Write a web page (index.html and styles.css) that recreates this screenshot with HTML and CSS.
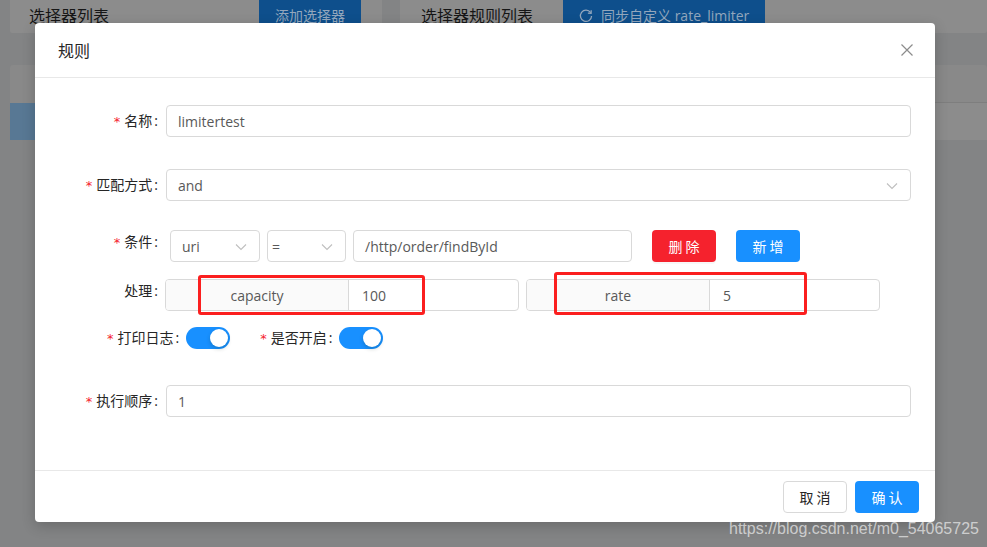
FILE: index.html
```html
<!DOCTYPE html>
<html lang="zh">
<head>
<meta charset="utf-8">
<title>规则</title>
<link rel="stylesheet" href="styles.css">
</head>
<body>
<div class="page">
  <div class="col col-left">
    <div class="topbar">
      <span class="top-title">选择器列表</span>
      <span class="top-btn btn-left">添加选择器</span>
    </div>
    <div class="table">
      <div class="thead"></div>
      <div class="trow selected"></div>
    </div>
  </div>
  <div class="col col-right">
    <div class="topbar topbar-right">
      <span class="top-title">选择器规则列表</span>
      <span class="top-btn btn-right">
        <svg class="sync" width="14" height="14" viewBox="0 0 14 14"><path d="M11.6 3.6 A5.6 5.6 0 1 0 12.6 7" fill="none" stroke="currentColor" stroke-width="1.3"/><path d="M12.2 1.2 L12.1 4.4 L8.9 4.2" fill="none" stroke="currentColor" stroke-width="1.3"/></svg>
        同步自定义 rate_limiter
      </span>
    </div>
    <div class="table">
      <div class="thead"></div>
      <div class="trow"></div>
    </div>
  </div>
</div>

<div class="modal">
  <div class="modal-header">
    <span class="modal-title">规则</span>
    <svg class="close" width="12" height="12" viewBox="0 0 12 12"><path d="M0.5 0.5 L11.5 11.5 M11.5 0.5 L0.5 11.5" stroke="currentColor" stroke-width="1.2"/></svg>
  </div>
  <div class="modal-body">
    <div class="item item-name">
      <div class="label"><span class="req">*</span>名称<span class="colon">:</span></div>
      <div class="control"><div class="input">limitertest</div></div>
    </div>
    <div class="item item-match">
      <div class="label"><span class="req">*</span>匹配方式<span class="colon">:</span></div>
      <div class="control"><div class="input select">and<svg class="arrow" width="12" height="8" viewBox="0 0 12 8"><path d="M1 1.5 L6 6.5 L11 1.5" fill="none" stroke="currentColor" stroke-width="1.1"/></svg></div></div>
    </div>
    <div class="item item-cond">
      <div class="label"><span class="req">*</span>条件<span class="colon">:</span></div>
      <div class="control cond-controls">
        <div class="input select sel-uri">uri<svg class="arrow" width="12" height="8" viewBox="0 0 12 8"><path d="M1 1.5 L6 6.5 L11 1.5" fill="none" stroke="currentColor" stroke-width="1.1"/></svg></div>
        <div class="input select sel-op">=<svg class="arrow" width="12" height="8" viewBox="0 0 12 8"><path d="M1 1.5 L6 6.5 L11 1.5" fill="none" stroke="currentColor" stroke-width="1.1"/></svg></div>
        <div class="input cond-value">/http/order/findById</div>
        <span class="btn btn-danger">删 除</span>
        <span class="btn btn-primary btn-add">新 增</span>
      </div>
    </div>
    <div class="item item-handle">
      <div class="label">处理<span class="colon">:</span></div>
      <div class="control handle-controls">
        <div class="group">
          <div class="addon">capacity</div>
          <div class="group-input">100</div>
        </div>
        <div class="group">
          <div class="addon">rate</div>
          <div class="group-input">5</div>
        </div>
      </div>
    </div>
    <div class="item item-switch">
      <div class="inline">
        <span class="inline-label"><span class="req">*</span>打印日志<span class="colon">:</span></span>
        <span class="switch"><span class="knob"></span></span>
      </div>
      <div class="inline">
        <span class="inline-label"><span class="req">*</span>是否开启<span class="colon">:</span></span>
        <span class="switch"><span class="knob"></span></span>
      </div>
    </div>
    <div class="item item-order">
      <div class="label"><span class="req">*</span>执行顺序<span class="colon">:</span></div>
      <div class="control"><div class="input">1</div></div>
    </div>
  </div>
  <div class="modal-footer">
    <span class="btn btn-default">取 消</span>
    <span class="btn btn-primary">确 认</span>
  </div>
  <div class="mark mark-1"></div>
  <div class="mark mark-2"></div>
</div>

<div class="watermark">https://blog.csdn.net/m0_54065725</div>
</body>
</html>
```

FILE: styles.css
```css
html, body {
  margin: 0;
  padding: 0;
}
body {
  width: 987px;
  height: 547px;
  overflow: hidden;
  position: relative;
  background: #838485;
  font-family: "Open Sans", "Noto Sans CJK SC", sans-serif;
  font-size: 14px;
  color: #262626;
}

/* background page (already dimmed by mask) */
.page {
  display: flex;
  gap: 18px;
  padding-left: 10px;
}
.col-left { width: 372px; flex: none; }
.col-right { flex: 1; }
.topbar {
  height: 33px;
  background: #8c8c8c;
  display: flex;
  align-items: flex-start;
  padding-left: 19px;
  border-radius: 0 0 2px 2px;
}
.topbar-right { padding-left: 21px; }
.top-title {
  font-size: 16px;
  line-height: 31px;
  color: #161616;
  font-family: "Noto Sans CJK SC", sans-serif;
}
.top-btn {
  display: flex;
  align-items: center;
  height: 31px;
  padding: 0 16px;
  background: #0e4f8c;
  color: #93a7bd;
  font-size: 14px;
  line-height: 31px;
}
.btn-left { margin-left: 150px; }
.btn-right { margin-left: 30px; }
.sync { margin-right: 8px; margin-top: 1px; }

.table {
  margin-top: 32px;
  border-radius: 3px 3px 0 0;
  overflow: hidden;
}
.thead { height: 38px; background: #898989; }
.col-right .thead { height: 37px; border-bottom: 1px solid #7e7e7e; }
.trow { height: 37px; background: #8c8c8c; }
.trow.selected { background: #587894; }

/* modal */
.modal {
  position: absolute;
  left: 35px;
  top: 23px;
  width: 900px;
  background: #fff;
  border-radius: 4px;
  box-shadow: 0 4px 14px rgba(0, 0, 0, 0.2);
}
.modal-header {
  display: flex;
  align-items: center;
  justify-content: space-between;
  padding: 16px 22px 16px 23px;
  border-bottom: 1px solid #e8e8e8;
}
.modal-title {
  font-size: 16px;
  line-height: 22px;
  color: #262626;
  font-family: "Noto Sans CJK SC", sans-serif;
}
.close { color: #8c8c8c; }

.modal-body {
  padding: 27px 24px 53px;
}
.item {
  display: flex;
  align-items: flex-start;
}
.item-name { margin-bottom: 32px; }
.item-match { margin-bottom: 25px; }
.item-cond { margin-bottom: 9px; }
.item-handle { margin-bottom: 7px; }
.item-switch { margin-bottom: 31px; }

.label {
  width: 107px;
  height: 32px;
  flex: none;
  box-sizing: border-box;
  text-align: right;
  line-height: 32px;
  color: #262626;
  white-space: nowrap;
}
.req {
  color: #f5222d;
  margin-right: 4px;
  font-family: "DejaVu Sans", sans-serif;
  font-size: 13px;
  line-height: 1;
}
.colon {
  margin: 0 8px 0 2px;
}
.control { flex: 1; }

.input {
  box-sizing: border-box;
  height: 32px;
  border: 1px solid #d9d9d9;
  border-radius: 4px;
  padding: 2px 11px 0;
  line-height: 28px;
  color: #595959;
  position: relative;
  white-space: nowrap;
}
.select .arrow {
  position: absolute;
  right: 12px;
  top: 12px;
  color: #bfbfbf;
}

.cond-controls {
  display: flex;
  align-items: center;
  padding: 4px 0;
}
.sel-uri { width: 90px; margin-left: 4px; flex: none; }
.sel-op { width: 79px; margin-left: 7px; padding-left: 4px; flex: none; }
.cond-value { width: 279px; margin-left: 7px; flex: none; }
.btn {
  display: inline-flex;
  align-items: center;
  justify-content: center;
  box-sizing: border-box;
  width: 64px;
  height: 32px;
  border-radius: 4px;
  font-size: 14px;
  font-family: "Noto Sans CJK SC", sans-serif;
  flex: none;
}
.btn-danger {
  background: #f5222d;
  color: #fff;
  margin-left: 20px;
  box-shadow: 0 2px 0 rgba(0, 0, 0, 0.03);
}
.btn-primary {
  background: #1890ff;
  color: #fff;
}
.btn-add { margin-left: 20px; }
.btn-default {
  background: #fff;
  border: 1px solid #d9d9d9;
  color: #262626;
}

.handle-controls {
  display: flex;
  gap: 7px;
  padding: 4px 0;
  margin-left: -1px;
}
.group {
  display: flex;
  width: 354px;
  height: 32px;
  box-sizing: border-box;
  border: 1px solid #d9d9d9;
  border-radius: 4px;
  overflow: hidden;
}
.addon {
  width: 182px;
  flex: none;
  background: #fafafa;
  border-right: 1px solid #d9d9d9;
  text-align: center;
  padding-top: 2px;
  line-height: 28px;
  color: #595959;
}
.group-input {
  flex: 1;
  padding: 2px 13px 0;
  line-height: 28px;
  color: #595959;
}

.item-switch {
  padding-left: 48px;
  height: 32px;
  align-items: center;
  gap: 30px;
}
.inline {
  display: flex;
  align-items: center;
  height: 32px;
}
.inline-label {
  height: 32px;
  line-height: 32px;
  color: #262626;
  white-space: nowrap;
}
.inline-label .colon { margin: 0 7px 0 2px; }
.switch {
  position: relative;
  width: 44px;
  height: 22px;
  border-radius: 11px;
  background: #1890ff;
  flex: none;
}
.knob {
  position: absolute;
  top: 2px;
  right: 2px;
  width: 18px;
  height: 18px;
  border-radius: 50%;
  background: #fff;
  box-shadow: 0 2px 4px rgba(0, 35, 11, 0.2);
}

.modal-footer {
  display: flex;
  justify-content: flex-end;
  gap: 8px;
  padding: 10px 16px 9px;
  border-top: 1px solid #e8e8e8;
}

/* annotation boxes drawn over the form */
.mark {
  position: absolute;
  box-sizing: border-box;
  border: 3px solid #fb1f1f;
  border-radius: 3px;
}
.mark-1 {
  left: 163px;
  top: 252px;
  width: 227px;
  height: 40px;
}
.mark-2 {
  left: 519px;
  top: 249px;
  width: 253px;
  height: 43px;
}

.watermark {
  position: absolute;
  left: 729px;
  top: 519px;
  font-family: "Liberation Sans", Arial, sans-serif;
  font-size: 16px;
  line-height: 20px;
  color: rgba(255, 255, 255, 0.62);
  white-space: nowrap;
}
```
